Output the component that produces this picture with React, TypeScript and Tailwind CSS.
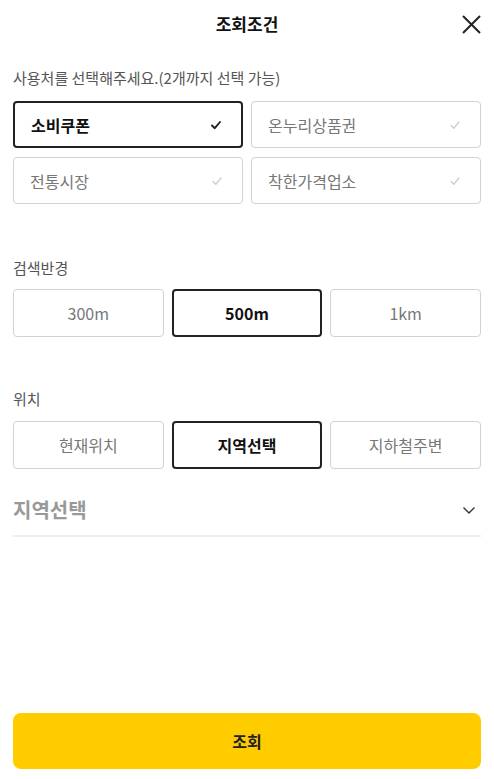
import React from "react";

const font = { fontFamily: '"Noto Sans CJK KR", "Noto Sans", sans-serif' };

function Check({ dark }: { dark: boolean }) {
  return (
    <svg width="14" height="14" viewBox="0 0 14 14" fill="none">
      <path
        d="M3 7.5 L5.8 10.2 L11 4"
        stroke={dark ? "#222222" : "#cfcfcf"}
        strokeWidth={dark ? 1.9 : 1.4}
        strokeLinecap="round"
        strokeLinejoin="round"
      />
    </svg>
  );
}

function PlaceBox({ label, selected }: { label: string; selected?: boolean }) {
  return (
    <div
      className={
        "h-[47px] rounded-[4px] flex items-center justify-between pl-4 pr-[18px] " +
        (selected ? "border-2 border-[#222222]" : "border border-[#d2d2d2]")
      }
    >
      <span
        className={
          selected
            ? "text-[16px] font-bold text-[#111111]"
            : "text-[16px] text-[#777777]"
        }
      >
        {label}
      </span>
      <Check dark={!!selected} />
    </div>
  );
}

function OptBox({ label, selected }: { label: string; selected?: boolean }) {
  return (
    <div
      className={
        "h-[48px] rounded-[4px] flex items-center justify-center " +
        (selected ? "border-2 border-[#222222]" : "border border-[#d2d2d2]")
      }
    >
      <span
        className={
          selected
            ? "text-[16px] font-bold text-[#111111]"
            : "text-[16px] text-[#777777]"
        }
      >
        {label}
      </span>
    </div>
  );
}

export default function App() {
  return (
    <div className="min-h-[779px] flex flex-col bg-white px-[13px]" style={font}>
      <div className="h-12 relative flex items-center justify-center">
        <span className="text-[17px] font-bold text-[#111111]">조회조건</span>
        <svg
          className="absolute right-0 top-[15px]"
          width="19"
          height="19"
          viewBox="0 0 19 19"
          fill="none"
        >
          <path d="M1 1 L18 18 M18 1 L1 18" stroke="#222222" strokeWidth="2" />
        </svg>
      </div>

      <div className="mt-[20px] text-[15px] leading-[20px] text-[#555555]">
        사용처를 선택해주세요.(2개까지 선택 가능)
      </div>
      <div className="mt-[13px] grid grid-cols-2 gap-x-2 gap-y-[9px]">
        <PlaceBox label="소비쿠폰" selected />
        <PlaceBox label="온누리상품권" />
        <PlaceBox label="전통시장" />
        <PlaceBox label="착한가격업소" />
      </div>

      <div className="mt-[54px] text-[15px] leading-[20px] text-[#555555]">검색반경</div>
      <div className="mt-[11px] grid grid-cols-3 gap-2">
        <OptBox label="300m" />
        <OptBox label="500m" selected />
        <OptBox label="1km" />
      </div>

      <div className="mt-[52px] text-[15px] leading-[20px] text-[#555555]">위치</div>
      <div className="mt-[12px] grid grid-cols-3 gap-2">
        <OptBox label="현재위치" />
        <OptBox label="지역선택" selected />
        <OptBox label="지하철주변" />
      </div>

      <div className="mt-[28px] flex items-center justify-between pb-[12px] border-b-2 border-[#eeeeee]">
        <span className="text-[20px] leading-[26px] font-bold text-[#999999]">지역선택</span>
        <svg className="mr-[5px]" width="14" height="14" viewBox="0 0 14 14" fill="none">
          <path d="M1.5 4.5 L7 10 L12.5 4.5" stroke="#333333" strokeWidth="1.4" />
        </svg>
      </div>

      <div className="flex-1" />

      <button className="mb-[10px] h-[56px] w-full rounded-[8px] bg-[#ffcc00] text-[16px] font-bold text-[#222222]">
        조회
      </button>
    </div>
  );
}
